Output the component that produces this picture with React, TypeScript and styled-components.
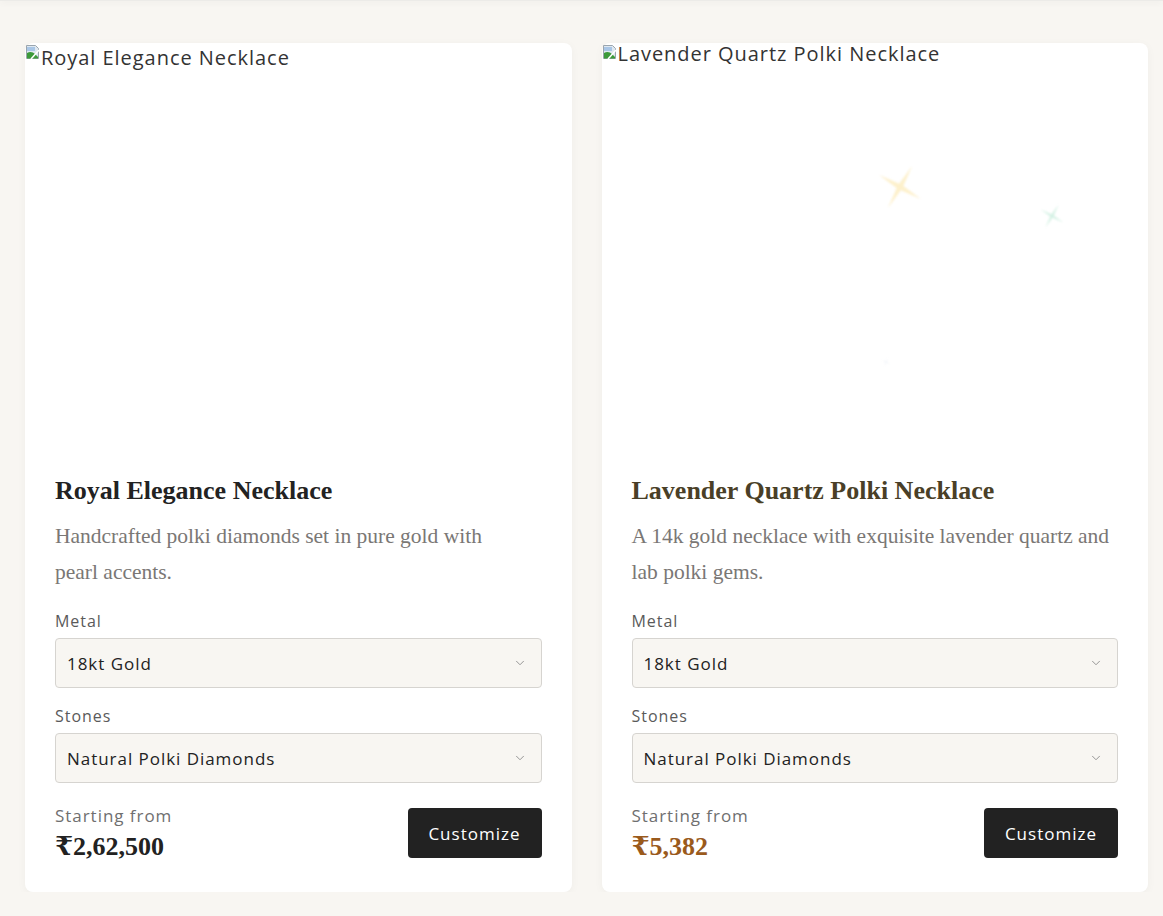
import styled, { createGlobalStyle } from "styled-components";
import { ChevronDown } from "lucide-react";

type Product = {
  name: string;
  description: string;
  metal: string;
  stones: string;
  price: string;
  accent?: boolean;
  altTop: number;
  sparkles?: boolean;
};

const products: Product[] = [
  {
    name: "Royal Elegance Necklace",
    description: "Handcrafted polki diamonds set in pure gold with pearl accents.",
    metal: "18kt Gold",
    stones: "Natural Polki Diamonds",
    price: "₹2,62,500",
    altTop: 4,
  },
  {
    name: "Lavender Quartz Polki Necklace",
    description: "A 14k gold necklace with exquisite lavender quartz and lab polki gems.",
    metal: "18kt Gold",
    stones: "Natural Polki Diamonds",
    price: "₹5,382",
    accent: true,
    altTop: 0,
    sparkles: true,
  },
];

const BrokenImageIcon = () => (
  <svg width="16" height="16" viewBox="0 0 16 16">
    <path d="M1.5 1.5h9l3 3v10h-12z" fill="#dfe8f0" stroke="#9aa5ae" />
    <path d="M2 9c3-2 6-1 8 1l3 3v1.5H2z" fill="#3c9a3a" />
    <path d="M2 3h8v4H2z" fill="#a9c6e6" />
    <path d="M14 6L6 15" stroke="#fff" strokeWidth="1.5" />
  </svg>
);

const Sparkle = ({ size, color }: { size: number; color: string }) => (
  <svg width={size} height={size} viewBox="0 0 40 40">
    <path
      d="M20 0 L22 18 L40 20 L22 22 L20 40 L18 22 L0 20 L18 18 Z"
      fill={color}
      transform="rotate(30 20 20)"
    />
  </svg>
);

const App = () => {
  return (
    <>
      <GlobalStyle />
      <TopShade />
      <Grid>
        {products.map((p) => (
          <Card key={p.name}>
            <ImageBox>
              <AltText>
                <BrokenImageIcon />
                <AltLabel $top={p.altTop}>{p.name}</AltLabel>
              </AltText>
              {p.sparkles && (
                <>
                  <SparkleSpot $x={274} $y={120}>
                    <Sparkle size={48} color="rgba(250, 222, 140, 0.45)" />
                  </SparkleSpot>
                  <SparkleSpot $x={437} $y={160}>
                    <Sparkle size={26} color="rgba(160, 225, 195, 0.45)" />
                  </SparkleSpot>
                  <SparkleSpot $x={280} $y={306}>
                    <Sparkle size={8} color="rgba(200, 210, 230, 0.35)" />
                  </SparkleSpot>
                </>
              )}
            </ImageBox>
            <Body>
              <Title $accent={p.accent}>{p.name}</Title>
              <Description>{p.description}</Description>
              <Label>Metal</Label>
              <Select>
                {p.metal}
                <ChevronDown size={14} strokeWidth={1.5} />
              </Select>
              <Label>Stones</Label>
              <Select>
                {p.stones}
                <ChevronDown size={14} strokeWidth={1.5} />
              </Select>
              <Footer>
                <PriceBlock>
                  <Small>Starting from</Small>
                  <Price $accent={p.accent}>{p.price}</Price>
                </PriceBlock>
                <Button>Customize</Button>
              </Footer>
            </Body>
          </Card>
        ))}
      </Grid>
    </>
  );
};

export default App;

const GlobalStyle = createGlobalStyle`
  body {
    margin: 0;
    background: #f8f6f2;
    font-family: "Open Sans", "Liberation Sans", sans-serif;
    letter-spacing: 0.06em;
    overflow: hidden;
  }
`;

const TopShade = styled.div`
  height: 1px;
  background: #ecebe8;
  box-shadow: 0 1px 6px rgba(0, 0, 0, 0.14);
`;

const Grid = styled.div`
  display: grid;
  grid-template-columns: 1fr 1fr;
  gap: 30px;
  padding: 42px 15px 0 25px;
`;

const Card = styled.div`
  background: #ffffff;
  border-radius: 8px;
  box-shadow: 0 2px 10px rgba(0, 0, 0, 0.04);
  display: flex;
  flex-direction: column;
`;

const ImageBox = styled.div`
  position: relative;
  height: 400px;
`;

const AltText = styled.div`
  display: flex;
  align-items: flex-start;
  padding-top: 1px;
  color: #333;
  svg {
    flex-shrink: 0;
  }
`;

const AltLabel = styled.span<{ $top: number }>`
  padding-top: ${(p) => p.$top}px;
  font-size: 20px;
  line-height: 20px;
`;

const SparkleSpot = styled.div<{ $x: number; $y: number }>`
  position: absolute;
  left: ${(p) => p.$x}px;
  top: ${(p) => p.$y}px;
  filter: blur(1px);
`;

const Body = styled.div`
  padding: 32px 30px 30px;
  display: flex;
  flex-direction: column;
`;

const Title = styled.h3<{ $accent?: boolean }>`
  margin: 0;
  font-family: "Liberation Serif", "DejaVu Serif", serif;
  font-weight: 700;
  font-size: 26px;
  line-height: 31px;
  letter-spacing: 0;
  color: ${(p) => (p.$accent ? "#4a3f27" : "#222222")};
`;

const Description = styled.p`
  margin: 12px 0 0;
  font-family: "Liberation Serif", serif;
  font-size: 21.5px;
  line-height: 36px;
  letter-spacing: 0;
  text-wrap: pretty;
  color: #7a7775;
`;

const Label = styled.div`
  margin: 19px 0 5px;
  font-size: 16px;
  line-height: 24px;
  color: #5a5a5a;
  & + div + & {
    margin-top: 16px;
  }
`;

const Select = styled.div`
  height: 50px;
  box-sizing: border-box;
  display: flex;
  align-items: center;
  justify-content: space-between;
  padding: 0 14px 0 11px;
  background: #f8f6f2;
  border: 1px solid #d6d4d0;
  border-radius: 4px;
  font-size: 17px;
  color: #222;
  svg {
    color: #888;
  }
`;

const Footer = styled.div`
  margin-top: 21px;
  display: flex;
  align-items: center;
  justify-content: space-between;
`;

const PriceBlock = styled.div`
  display: flex;
  flex-direction: column;
  gap: 4px;
`;

const Small = styled.div`
  font-size: 17px;
  line-height: 24px;
  color: #6f6f6f;
`;

const Price = styled.div<{ $accent?: boolean }>`
  font-family: "Liberation Serif", "DejaVu Serif", serif;
  font-weight: 700;
  font-size: 26px;
  line-height: 30px;
  letter-spacing: 0;
  color: ${(p) => (p.$accent ? "#9a5a1c" : "#222222")};
`;

const Button = styled.button`
  height: 50px;
  width: 134px;
  border: none;
  border-radius: 4px;
  background: #222222;
  color: #ffffff;
  font-family: "Open Sans", sans-serif;
  font-size: 17px;
  font-weight: 500;
  letter-spacing: 0.06em;
  cursor: pointer;
`;
